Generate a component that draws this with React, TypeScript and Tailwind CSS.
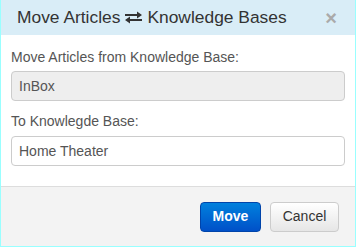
function TransferIcon() {
  return (
    <svg width="17" height="13" viewBox="0 0 17 13" className="mx-[5px] inline-block">
      <path d="M0 3h12V0.5l5 3.5-5 3.5V5H0z" fill="#333" />
      <path d="M17 8H5V5.5L0 9l5 3.5V10h12z" fill="#333" />
    </svg>
  );
}

export default function App() {
  return (
    <div className="flex h-[247px] w-[356px] flex-col border-x border-b border-[#99ffff] bg-white font-['Liberation_Sans',Arial,sans-serif]">
      <div className="flex h-[35px] shrink-0 items-center justify-between bg-[#d9edf7] pl-[16px] pr-[18px]">
        <div className="flex items-center text-[17.4px] text-[#333]">
          Move Articles
          <TransferIcon />
          Knowledge Bases
        </div>
        <span className="text-[20px] font-bold leading-none text-[#aaa]">×</span>
      </div>

      <div className="flex flex-1 flex-col px-[10px] pt-[12px]">
        <label className="text-[14px] leading-[20px] text-[#555]">
          Move Articles from Knowledge Base:
        </label>
        <div className="mt-[4px] flex h-[30px] items-center rounded-[4px] border border-[#ccc] bg-[#eee] px-[7px] text-[14px] text-[#555]">
          InBox
        </div>
        <label className="mt-[10px] text-[14px] leading-[20px] text-[#555]">
          To Knowlegde Base:
        </label>
        <div className="mt-[5px] flex h-[30px] items-center rounded-[4px] border border-[#ccc] bg-white px-[7px] text-[14px] text-[#555]">
          Home Theater
        </div>
      </div>

      <div className="flex h-[60px] shrink-0 items-center justify-end gap-[9px] border-t border-[#ddd] bg-[#f3f3f3] pr-[16px]">
        <button
          type="button"
          className="h-[30px] w-[61px] rounded-[4px] border border-[#0044aa] bg-gradient-to-b from-[#0080dd] to-[#0050c8] text-[14px] font-bold text-white"
        >
          Move
        </button>
        <button
          type="button"
          className="h-[30px] w-[69px] rounded-[4px] border border-[#ccc] bg-gradient-to-b from-white to-[#e6e6e6] text-[14px] text-[#333]"
        >
          Cancel
        </button>
      </div>
    </div>
  );
}
